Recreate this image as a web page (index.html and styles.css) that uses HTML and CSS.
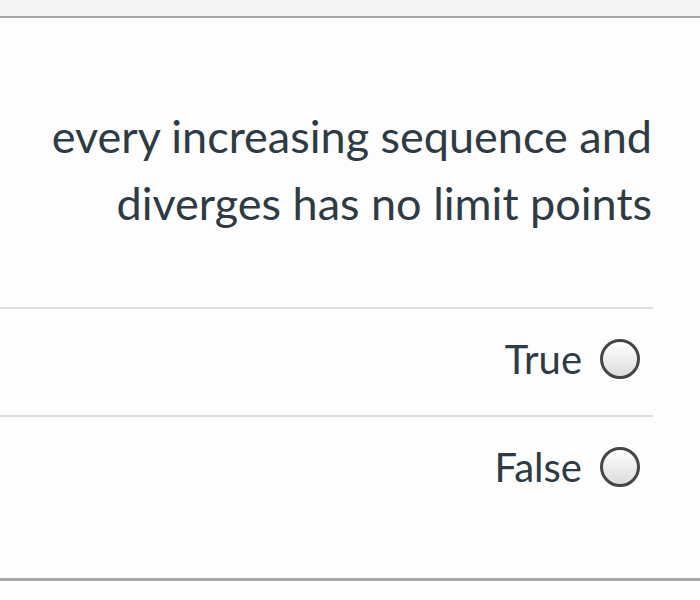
FILE: index.html
```html
<!DOCTYPE html>
<html>
<head>
<meta charset="utf-8">
<link rel="stylesheet" href="styles.css">
</head>
<body>
<div class="topbar"></div>
<div class="card">
  <div class="question">
    <p>every increasing sequence and<br>diverges has no limit points</p>
  </div>
  <div class="answers">
    <label class="answer">
      <span class="label">True</span>
      <span class="radio"></span>
    </label>
    <label class="answer">
      <span class="label">False</span>
      <span class="radio"></span>
    </label>
  </div>
</div>
<div class="bottombar"></div>
</body>
</html>
```

FILE: styles.css
```css
html, body {
  margin: 0;
  padding: 0;
  background: #fdfdfd;
  font-family: Lato, "Liberation Sans", sans-serif;
  color: #2d3b45;
}
.topbar {
  height: 16px;
  background: #f4f4f4;
  border-bottom: 2px solid #a6a6a6;
}
.card {
  height: 560px;
  display: flex;
  flex-direction: column;
}
.question {
  flex-shrink: 0;
  padding: 85px 48px 0 0;
  height: 289px;
  box-sizing: border-box;
  text-align: right;
}
.question p {
  margin: 0;
  font-size: 45px;
  line-height: 67px;
}
.answers {
  width: 653px;
}
.answer {
  display: flex;
  justify-content: flex-end;
  align-items: center;
  gap: 18px;
  height: 106px;
  box-sizing: content-box;
  border-top: 2px solid #dedede;
  padding-right: 13px;
}
.answer > * {
  margin-bottom: 7px;
}
.label {
  font-size: 40px;
}
.radio {
  width: 34px;
  height: 34px;
  border-radius: 50%;
  border: 3px solid #454545;
  background: linear-gradient(#ffffff, #dcdcdc);
}
.bottombar {
  border-top: 3px solid #a8a8a8;
}
```
